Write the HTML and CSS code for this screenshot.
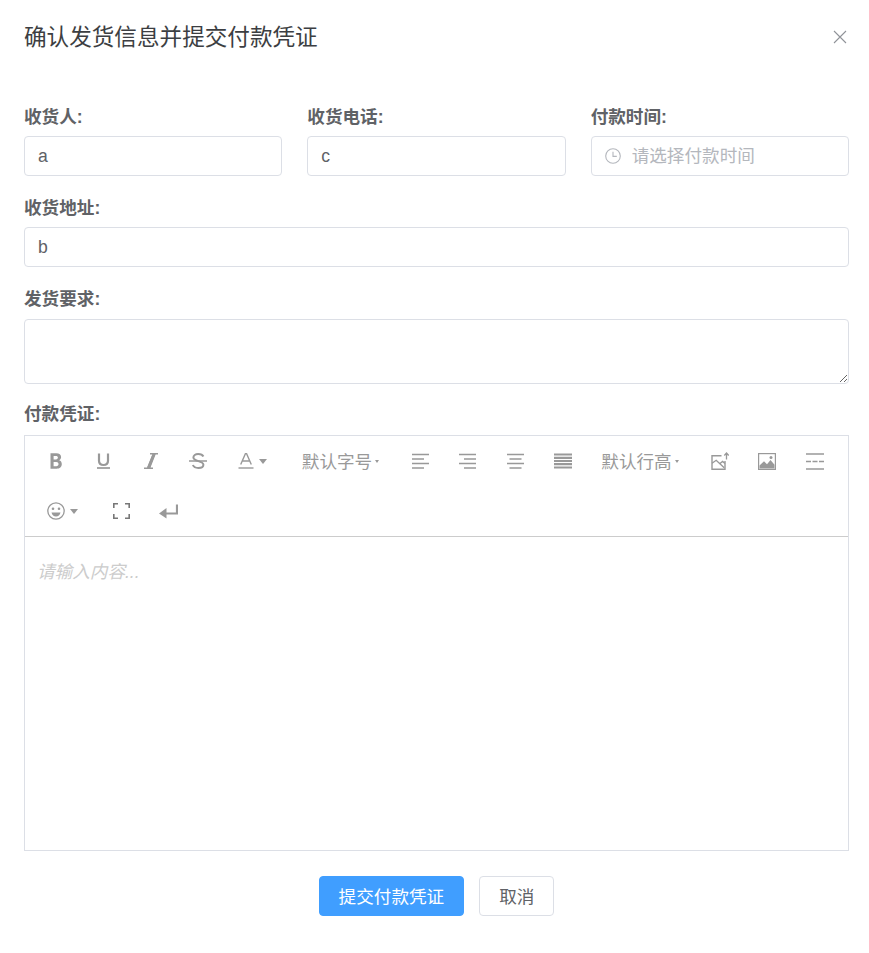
FILE: index.html
```html
<!DOCTYPE html>
<html lang="zh-CN">
<head>
<meta charset="utf-8">
<title>确认发货信息并提交付款凭证</title>
<link rel="stylesheet" href="styles.css">
</head>
<body>
<div class="dialog">
  <header class="dialog-head">
    <h1 class="dialog-title">确认发货信息并提交付款凭证</h1>
    <button class="close" aria-label="关闭">
      <svg width="14" height="14" viewBox="0 0 14 14"><path d="M1 1l12 12M13 1L1 13" stroke="#909399" stroke-width="1.1" fill="none"/></svg>
    </button>
  </header>
  <form class="form">
    <div class="row-three">
      <div class="field"><label class="label">收货人:</label><input class="input" value="a"></div>
      <div class="field"><label class="label">收货电话:</label><input class="input" value="c"></div>
      <div class="field"><label class="label">付款时间:</label>
        <div class="picker">
          <svg class="clock" width="16" height="16" viewBox="0 0 16 16"><circle cx="8" cy="8" r="7.300" fill="none" stroke="#b4b7bd" stroke-width="1.100"/><path d="M8 3.800V8.400H11.800" fill="none" stroke="#b4b7bd" stroke-width="1.100"/></svg>
          <input class="input input-time" placeholder="请选择付款时间">
        </div>
      </div>
    </div>
    <div class="field"><label class="label">收货地址:</label><input class="input" value="b"></div>
    <div class="field field-note"><label class="label">发货要求:</label><textarea class="textarea"></textarea></div>
    <div class="field field-proof"><label class="label">付款凭证:</label>
      <div class="editor">
        <div class="toolbar">
          <span class="tool"><svg width="12" height="16" viewBox="0 0 12 16"><path d="M0.500 0.300h5.800c3 0 4.800 1.300 4.800 3.800 0 1.500-.8 2.600-2 3.200 1.700.5 2.700 1.900 2.700 3.700 0 3-2.100 4.700-5.200 4.700H0.500z M3.600 2.900v3.500h2.300c1.300 0 2-.6 2-1.800S7.200 2.900 5.900 2.900z M3.600 8.900v4.300h2.700c1.400 0 2.200-.8 2.200-2.200S7.700 8.900 6.300 8.900z" fill="#999" fill-rule="evenodd"/></svg></span>
          <span class="tool"><svg width="13" height="16" viewBox="0 0 13 16"><path d="M2 .5v7.300c0 2.700 1.700 4.200 4.500 4.200S11 10.500 11 7.800V.5" fill="none" stroke="#999" stroke-width="2.200"/><path d="M0 15h13" stroke="#999" stroke-width="1.700"/></svg></span>
          <span class="tool"><svg width="14" height="16" viewBox="0 0 14 16"><path d="M6 0h8v1.400h-2.400L6.500 14.600H9V16H0v-1.400h3L8.300 1.400H6z" fill="#999"/><path d="M8.500 1.400h2.700L6 14.600H3.300z" fill="#999"/></svg></span>
          <span class="tool"><svg width="18" height="16" viewBox="0 0 18 16"><path d="M14.400 3.500C13.600 1.800 11.700 1.100 9.200 1.100c-2.900 0-4.800 1.300-4.800 3.400 0 4.300 10 2.900 10 7.200 0 2-2 3.200-5 3.200-2.700 0-4.700-.9-5.500-2.900" fill="none" stroke="#999" stroke-width="2"/><path d="M0 8h18" stroke="#999" stroke-width="1.500"/></svg></span>
          <span class="tool tool-menu"><svg width="16" height="16" viewBox="0 0 16 16"><path d="M2.700 11.500L7.500.5h1l4.800 11M4.500 8h7" fill="none" stroke="#999" stroke-width="1.400"/><path d="M.5 15h15" stroke="#999" stroke-width="1.400"/></svg><i class="caret"></i></span>
          <span class="tool tool-text">默认字号<i class="caret-small"></i></span>
          <span class="tool"><svg width="17" height="16" viewBox="0 0 17 16"><path d="M0 1.500h17M0 6h12M0 10.500h17M0 15h12" stroke="#999" stroke-width="1.700"/></svg></span>
          <span class="tool"><svg width="17" height="16" viewBox="0 0 17 16"><path d="M0 1.500h17M5 6h12M0 10.500h17M5 15h12" stroke="#999" stroke-width="1.700"/></svg></span>
          <span class="tool"><svg width="17" height="16" viewBox="0 0 17 16"><path d="M0 1.500h17M2.500 6h12M0 10.500h17M2.500 15h12" stroke="#999" stroke-width="1.700"/></svg></span>
          <span class="tool"><svg width="18" height="16" viewBox="0 0 18 16"><path d="M0 1.500h18M0 4.800h18M0 8h18M0 11.200h18M0 14.500h18" stroke="#999" stroke-width="2.200"/></svg></span>
          <span class="tool tool-text">默认行高<i class="caret-small"></i></span>
          <span class="tool"><svg width="18" height="18" viewBox="0 0 18 18"><path d="M10.500 3.700H1v13.600h13V9" fill="none" stroke="#999" stroke-width="1.400"/><path d="M1 11.300l4.200-3 8 7.500M9 11.500l2.600-2 2.400 2" fill="none" stroke="#999" stroke-width="1.400"/><path d="M15.500 7.500V1.500M13.300 3.500l2.200-2.500 2.200 2.500" fill="none" stroke="#999" stroke-width="1.300"/></svg></span>
          <span class="tool"><svg width="18" height="17" viewBox="0 0 18 17"><rect x=".6" y=".6" width="16.800" height="15.800" fill="none" stroke="#999" stroke-width="1.200"/><path d="M1.500 15.500v-3l4.500-4.200 3 3 3.500-4.300 4 4.800v3.700z" fill="#999"/><circle cx="13" cy="4.500" r="1.500" fill="#999"/></svg></span>
          <span class="tool"><svg width="18" height="17" viewBox="0 0 18 17"><path d="M0 1h18M0 16h18" stroke="#999" stroke-width="1.400"/><path d="M0 8.500h5M6.500 8.500h5M13 8.500h5" stroke="#999" stroke-width="1.400"/></svg></span>
          <span class="tool tool-menu tool-emoji"><svg width="18" height="18" viewBox="0 0 18 18"><circle cx="9" cy="9" r="8.200" fill="none" stroke="#999" stroke-width="1.300"/><circle cx="6" cy="6.800" r="1.300" fill="#999"/><circle cx="12" cy="6.800" r="1.300" fill="#999"/><path d="M4.500 10.500h9c-.6 2.500-2.300 4-4.500 4s-3.900-1.500-4.500-4z" fill="#999"/></svg><i class="caret"></i></span>
          <span class="tool"><svg width="17" height="16" viewBox="0 0 17 16"><path d="M.8 5V.8H5M12 .8h4.200V5M.8 11v4.200H5M12 15.200h4.200V11" fill="none" stroke="#777" stroke-width="1.600"/></svg></span>
          <span class="tool"><svg width="19" height="15" viewBox="0 0 19 15"><path d="M18 .5v9H6" fill="none" stroke="#999" stroke-width="2.200"/><path d="M7.500 4v10.500L0 9.500z" fill="#999"/></svg></span>
        </div>
        <div class="editor-body"><span class="editor-placeholder">请输入内容...</span></div>
      </div>
    </div>
    <div class="actions">
      <button type="button" class="btn btn-primary">提交付款凭证</button>
      <button type="button" class="btn">取消</button>
    </div>
  </form>
</div>
</body>
</html>
```
FILE: styles.css
```css
* { box-sizing: border-box; }
html, body { margin: 0; background: #fff; }
body {
  font-family: "Liberation Sans", "Noto Sans CJK SC", sans-serif;
  font-size: 17.6px;
  color: #606266;
}
.dialog { width: 869px; padding: 20px 20px 0 24px; }
.dialog-head { display: flex; justify-content: space-between; align-items: flex-start; height: 36px; }
.dialog-title { margin: 0; padding-top: 1px; font-size: 22.6px; font-weight: 400; line-height: 34px; color: #3c3e42; }
.close { display: flex; border: 0; padding: 0; margin: 10px 2px 0 0; background: none; }
.form { display: flex; flex-direction: column; gap: 22.4px; width: 825px; margin-top: 51px; }
.row-three { display: grid; grid-template-columns: repeat(3, 1fr); gap: 25px; }
.field { display: flex; flex-direction: column; }
.label { height: 20px; line-height: 20px; margin-bottom: 9px; font-weight: 700; color: #606266; }
.field-note .label { margin-top: -1px; margin-bottom: 10px; }
.field-proof .label { margin-top: -2px; margin-bottom: 11px; }
.input {
  display: block; width: 100%; height: 40px; padding: 0 13px;
  border: 1px solid #dcdfe6; border-radius: 4px; background: #fff;
  font: inherit; color: #606266; outline: 0;
}
.input::placeholder { color: #b4b7bd; opacity: 1; }
.picker { position: relative; }
.clock { position: absolute; left: 14px; top: 12px; }
.input-time { padding-left: 40px; }
.textarea {
  display: block; width: 100%; height: 65px; padding: 5px 15px;
  border: 1px solid #dcdfe6; border-radius: 4px; font: inherit; color: #606266; outline: 0;
}
.editor { height: 416px; border: 1px solid #dcdfe6; display: flex; flex-direction: column; }
.toolbar { display: flex; flex-wrap: wrap; align-content: flex-start; height: 101px; padding-left: 6.75px; border-bottom: 1px solid #ccc; }
.tool { display: flex; align-items: center; justify-content: center; width: 47.5px; height: 50px; color: #999; font-size: 17.6px; }
.tool-menu { width: 65px; justify-content: flex-start; padding-left: 16px; }
.tool-emoji { width: 65.5px; padding-left: 15.5px; }
.tool-text { width: 109.5px; padding: 0 2px 2px 0; white-space: nowrap; }
.caret { width: 0; height: 0; margin-left: 5px; border: 4.5px solid transparent; border-top: 5px solid #999; border-bottom: 0; }
.caret-small { width: 0; height: 0; margin-left: 3px; margin-top: 2px; border: 2px solid transparent; border-top: 3px solid #999; border-bottom: 0; }
.editor-body { flex: 1; padding: 21px 12px; }
.editor-placeholder { color: #ccc; font-style: italic; }
.actions { display: flex; justify-content: center; gap: 15px; margin-top: 2.4px; }
.btn {
  height: 40px; padding: 0 19px; border: 1px solid #dcdfe6; border-radius: 4px;
  background: #fff; color: #606266; font: inherit;
}
.btn-primary { background: #409eff; border-color: #409eff; color: #fff; }
```
